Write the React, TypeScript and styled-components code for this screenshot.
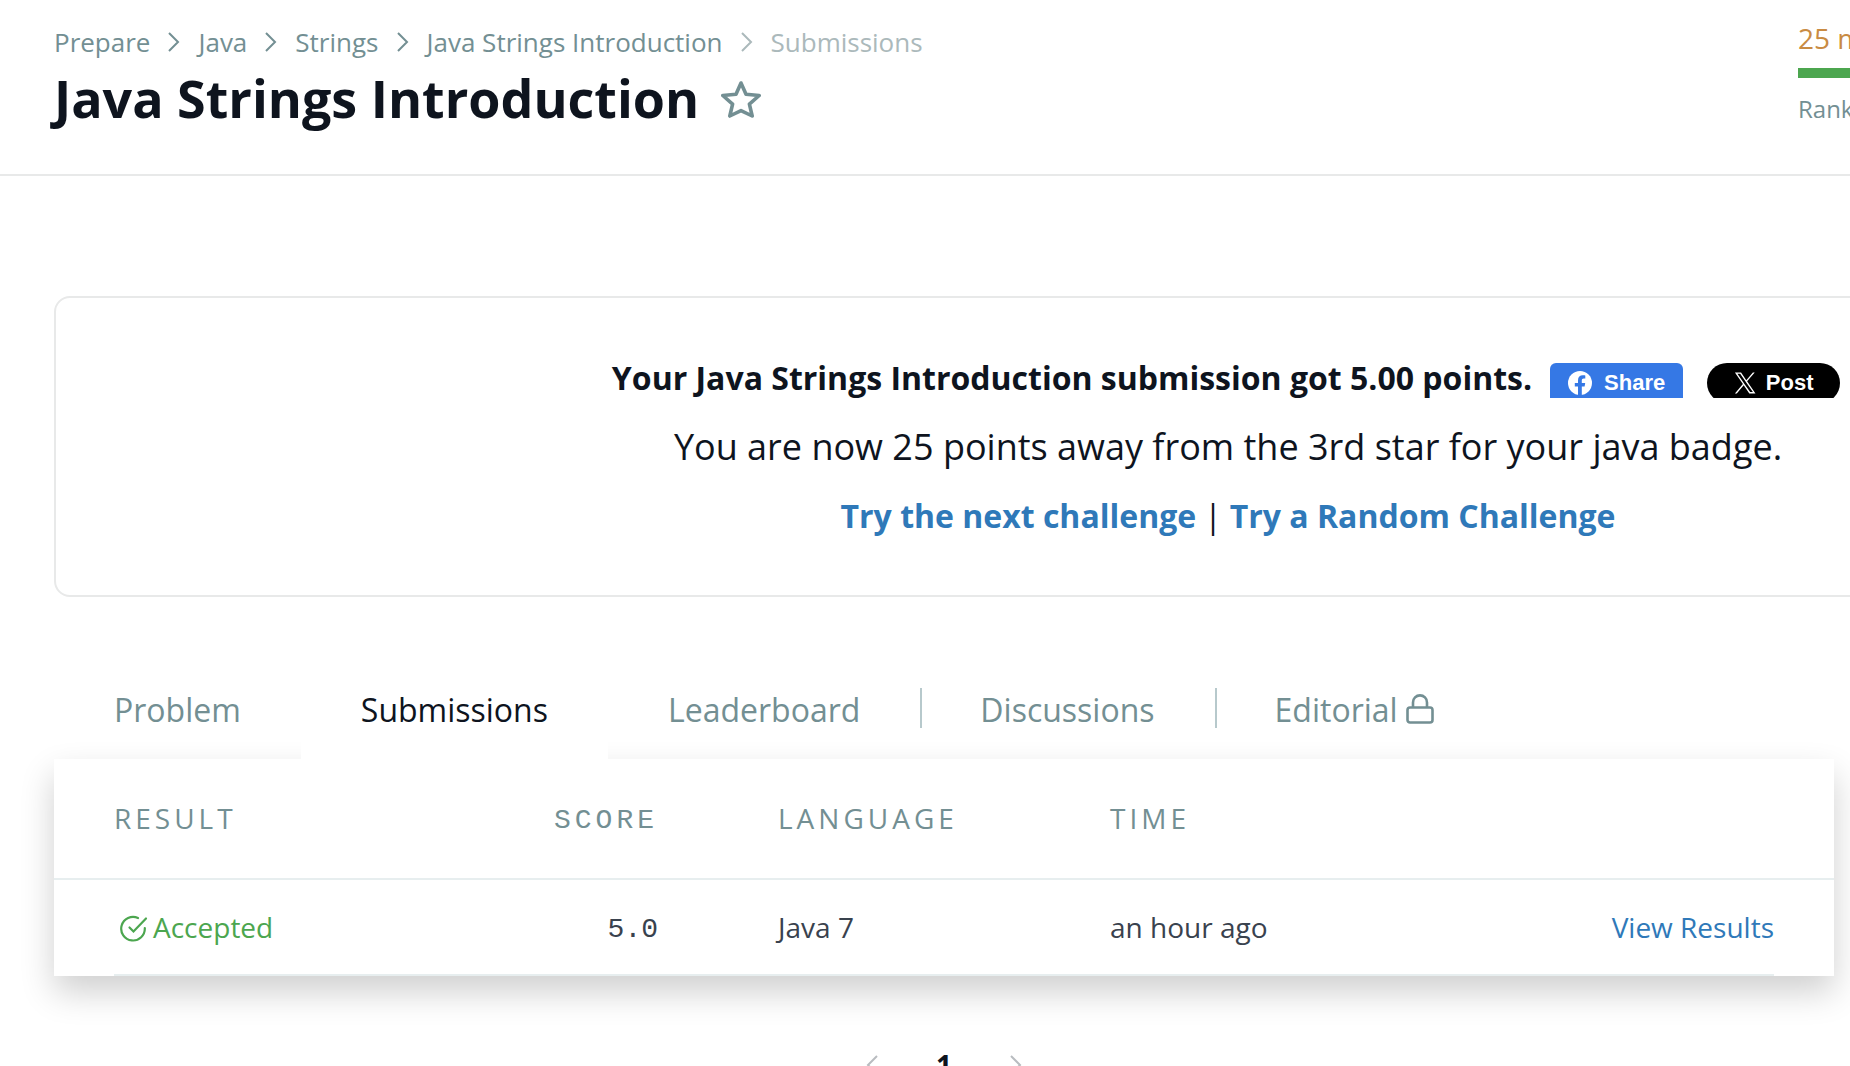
import React from "react";
import styled, { createGlobalStyle } from "styled-components";

const color = {
  ink: "#0e141e",
  body: "#39424e",
  muted: "#738f93",
  faint: "#abb9bb",
  line: "#e7eeef",
  rule: "#e8e9e9",
  link: "#2f79b9",
  green: "#4ca64f",
  orange: "#c98b43",
};

const GlobalStyle = createGlobalStyle`
  *, *::before, *::after { box-sizing: border-box; }
  body {
    margin: 0;
    background: #fff;
    color: ${color.ink};
    font-family: "Open Sans", "Noto Sans", sans-serif;
    font-size: 28px;
  }
  h1, p, ol { margin: 0; padding: 0; }
  a { color: inherit; text-decoration: none; }
  button { border: 0; margin: 0; padding: 0; background: none; color: inherit; font: inherit; cursor: pointer; }
  svg { display: block; flex: none; }
`;

const Page = styled.div`
  height: 100vh;
  overflow: hidden;
`;

const Header = styled.header`
  display: flex;
  justify-content: space-between;
  align-items: flex-start;
  height: 176px;
  padding-left: 54px;
  border-bottom: 2px solid ${color.rule};
`;

const Heading = styled.div`
  padding-top: 24px;
`;

const Breadcrumbs = styled.ol`
  display: flex;
  align-items: center;
  list-style: none;
  font-size: 26px;
  line-height: 36px;
  color: ${color.muted};
`;

const Crumb = styled.li<{ $current?: boolean }>`
  display: flex;
  align-items: center;
  color: ${(p) => (p.$current ? color.faint : color.muted)};

  svg { margin: 0 18px; }
`;

const TitleRow = styled.div`
  display: flex;
  align-items: center;
  gap: 22px;
`;

const Title = styled.h1`
  font-size: 52px;
  line-height: 76px;
  font-weight: 700;
`;

const StarButton = styled.button`
  padding-top: 2px;
  color: ${color.muted};
`;

const Progress = styled.div`
  flex: none;
  width: 52px;
  padding-top: 19px;
  white-space: nowrap;
`;

const NextStar = styled.p`
  font-size: 28px;
  line-height: 38px;
  color: ${color.orange};
`;

const ProgressBar = styled.div`
  height: 10px;
  margin: 11px 0 14px;
  background: ${color.green};
`;

const Rank = styled.p`
  font-size: 24px;
  line-height: 34px;
  color: ${color.muted};
`;

const Main = styled.main`
  padding: 120px 16px 0 54px;
`;

/* The banner is wider than the table and runs off the right edge. */
const Banner = styled.section`
  display: flex;
  flex-direction: column;
  align-items: center;
  min-width: 2348px;
  padding: 45px 0;
  border: 2px solid ${color.rule};
  border-radius: 16px;
`;

const BannerLine = styled.div`
  display: flex;
  align-items: center;
  height: 69px;
  font-size: 32px;
`;

const Strong = styled.strong`
  font-weight: 700;
`;

const BadgeText = styled.p`
  font-size: 36px;
`;

const BannerLink = styled.a`
  color: ${color.link};
  font-weight: 700;
`;

const Separator = styled.span`
  margin: 0 8px;
`;

const ShareGroup = styled.div`
  display: flex;
  gap: 24px;
  height: 35px;
  margin: 5px 4px 0 18px;
  overflow: hidden;
`;

const ShareButton = styled.button<{ $post?: boolean }>`
  display: flex;
  align-items: center;
  justify-content: center;
  gap: ${(p) => (p.$post ? 10 : 12)}px;
  width: 133px;
  height: 40px;
  border-radius: ${(p) => (p.$post ? 20 : 6)}px;
  background: ${(p) => (p.$post ? "#000" : "#3578e5")};
  color: #fff;
  font-family: "Liberation Sans", Arial, sans-serif;
  font-size: 22px;
  font-weight: 700;
`;

const Tabs = styled.nav`
  display: flex;
  align-items: center;
  margin-top: 64px;
`;

const Tab = styled.a<{ $active?: boolean }>`
  position: relative;
  z-index: ${(p) => (p.$active ? 1 : "auto")};
  display: flex;
  align-items: center;
  gap: 8px;
  height: 98px;
  padding: 0 60px 2px;
  font-size: 32px;
  background: ${(p) => (p.$active ? "#fff" : "transparent")};
  color: ${(p) => (p.$active ? color.ink : color.muted)};
`;

const TabDivider = styled.span`
  width: 2px;
  height: 40px;
  margin: 0 -2px 4px 0;
  background: #b7c9cc;
`;

const Panel = styled.section`
  background: #fff;
  box-shadow: 0 16px 32px rgba(0, 0, 0, 0.19);
`;

const Table = styled.table`
  width: 100%;
  border-collapse: separate;
  border-spacing: 0;
  table-layout: fixed;
  text-align: left;
`;

const Th = styled.th<{ $mono?: boolean }>`
  height: 121px;
  padding: 40px 0 0;
  border-bottom: 2px solid ${color.line};
  font-family: ${(p) => (p.$mono ? '"Liberation Mono", monospace' : "inherit")};
  font-size: 28px;
  font-weight: 400;
  line-height: ${(p) => (p.$mono ? 44 : 38)}px;
  letter-spacing: 4px;
  text-align: ${(p) => (p.$mono ? "right" : "left")};
  text-transform: uppercase;
  vertical-align: top;
  color: ${color.muted};
`;

const Td = styled.td<{ $mono?: boolean; $line?: boolean }>`
  height: 96px;
  padding: 28px 0 0;
  border-bottom: ${(p) => (p.$line === false ? "0" : `2px solid ${color.line}`)};
  font-family: ${(p) => (p.$mono ? '"Liberation Mono", monospace' : "inherit")};
  line-height: ${(p) => (p.$mono ? 44 : 38)}px;
  text-align: ${(p) => (p.$mono ? "right" : "left")};
  vertical-align: top;
  color: ${color.body};
`;

const Status = styled.span`
  display: flex;
  align-items: center;
  gap: 5px;
  padding-left: 6px;
  color: ${color.green};
`;

const ResultLink = styled.a`
  display: block;
  text-align: right;
  color: ${color.link};
`;

const Pager = styled.nav`
  display: flex;
  justify-content: center;
  align-items: center;
  gap: 58px;
  padding-top: 70px;
  font-size: 28px;
  font-weight: 700;
`;

const PageButton = styled.button`
  color: #b9bcc0;
`;

const Chevron = ({ flip }: { flip?: boolean }) => (
  <svg width="12" height="20" viewBox="0 0 12 20" fill="none" stroke="currentColor" strokeWidth="2">
    <path d={flip ? "M11 1 2 10l9 9" : "M1 1l9 9-9 9"} />
  </svg>
);

const Star = () => (
  <svg width="40" height="38" viewBox="0 0 40 38" fill="none" stroke="currentColor" strokeWidth="3.6" strokeLinejoin="round">
    <path d="M20 3l5 11.3 13.2 1.2-9.800 8.600L31.200 36 20 30.600 8.800 36l2.800-11.900L1.800 15.500 15 14.300z" />
  </svg>
);

const FacebookLogo = () => (
  <svg width="24" height="24" viewBox="0 0 24 24">
    <circle cx="12" cy="12" r="12" fill="#fff" />
    <path
      fill="#3578e5"
      d="M10 24v-8.500H6.800V12H10V9.300c0-3.200 1.900-5 4.800-5 1.300 0 2.500.2 2.500.2v3h-1.500c-1.500 0-2 .9-2 1.900V12h3.400l-.6 3.500h-2.800V24z"
    />
  </svg>
);

const XLogo = () => (
  <svg width="22" height="22" viewBox="0 0 24 24" fill="#fff">
    <path d="M14.300 10.200 22.600.5h-2l-7.200 8.400L7.700.5H1l8.700 12.700L1 23.400h2l7.600-8.900 6.100 8.900h6.700zm-2.700 3.100-.9-1.200L3.700 2h3l5.700 8.100.9 1.300 7.300 10.500h-3z" />
  </svg>
);

const Lock = () => (
  <svg width="28" height="30" viewBox="0 0 28 30" fill="none" stroke="currentColor" strokeWidth="2.600" strokeLinejoin="round">
    <rect x="1.500" y="13.500" width="25" height="15" rx="2.500" />
    <path d="M7 13.500V8.400a7 7 0 0 1 14 0v5.100" />
  </svg>
);

const CheckCircle = () => (
  <svg width="28" height="30" viewBox="0 0 28 30" fill="none" stroke="currentColor" strokeWidth="2.200" strokeLinecap="round">
    <path d="M18 6A11.800 11.800 0 1 0 24.800 16" />
    <path d="M9.500 15.500l4 4L26 6.500" />
  </svg>
);

const crumbs = ["Prepare", "Java", "Strings", "Java Strings Introduction"];

export default function App() {
  return (
    <Page>
      <GlobalStyle />
      <Header>
        <Heading>
          <Breadcrumbs aria-label="Breadcrumb">
            {crumbs.map((name, i) => (
              <Crumb key={name}>
                {i > 0 && <Chevron />}
                <a href="#">{name}</a>
              </Crumb>
            ))}
            <Crumb $current>
              <Chevron />
              Submissions
            </Crumb>
          </Breadcrumbs>
          <TitleRow>
            <Title>Java Strings Introduction</Title>
            <StarButton aria-label="Bookmark">
              <Star />
            </StarButton>
          </TitleRow>
        </Heading>
        <Progress>
          <NextStar>25 more</NextStar>
          <ProgressBar />
          <Rank>Rank</Rank>
        </Progress>
      </Header>
      <Main>
        <Banner>
          <BannerLine>
            <Strong>Your Java Strings Introduction submission got 5.00 points.</Strong>
            <ShareGroup>
              <ShareButton>
                <FacebookLogo />
                Share
              </ShareButton>
              <ShareButton $post>
                <XLogo />
                Post
              </ShareButton>
            </ShareGroup>
          </BannerLine>
          <BannerLine>
            <BadgeText>You are now 25 points away from the 3rd star for your java badge.</BadgeText>
          </BannerLine>
          <BannerLine>
            <BannerLink href="#">Try the next challenge</BannerLink>
            <Separator>|</Separator>
            <BannerLink href="#">Try a Random Challenge</BannerLink>
          </BannerLine>
        </Banner>
        <Tabs>
          <Tab href="#">Problem</Tab>
          <Tab href="#" $active>
            Submissions
          </Tab>
          <Tab href="#">Leaderboard</Tab>
          <TabDivider />
          <Tab href="#">Discussions</Tab>
          <TabDivider />
          <Tab href="#">
            Editorial
            <Lock />
          </Tab>
        </Tabs>
        <Panel>
          <Table>
            <colgroup>
              <col style={{ width: 60 }} />
              <col style={{ width: 300 }} />
              <col style={{ width: 244 }} />
              <col style={{ width: 120 }} />
              <col style={{ width: 332 }} />
              <col style={{ width: 332 }} />
              <col />
              <col style={{ width: 60 }} />
            </colgroup>
            <thead>
              <tr>
                <Th as="td" />
                <Th>Result</Th>
                <Th $mono>Score</Th>
                <Th as="td" />
                <Th>Language</Th>
                <Th>Time</Th>
                <Th as="td" />
                <Th as="td" />
              </tr>
            </thead>
            <tbody>
              <tr>
                <Td $line={false} />
                <Td>
                  <Status>
                    <CheckCircle />
                    Accepted
                  </Status>
                </Td>
                <Td $mono>5.0</Td>
                <Td />
                <Td>Java 7</Td>
                <Td>an hour ago</Td>
                <Td>
                  <ResultLink href="#">View Results</ResultLink>
                </Td>
                <Td $line={false} />
              </tr>
            </tbody>
          </Table>
        </Panel>
        <Pager aria-label="Pagination">
          <PageButton aria-label="Previous page">
            <Chevron flip />
          </PageButton>
          <span>1</span>
          <PageButton aria-label="Next page">
            <Chevron />
          </PageButton>
        </Pager>
      </Main>
    </Page>
  );
}
